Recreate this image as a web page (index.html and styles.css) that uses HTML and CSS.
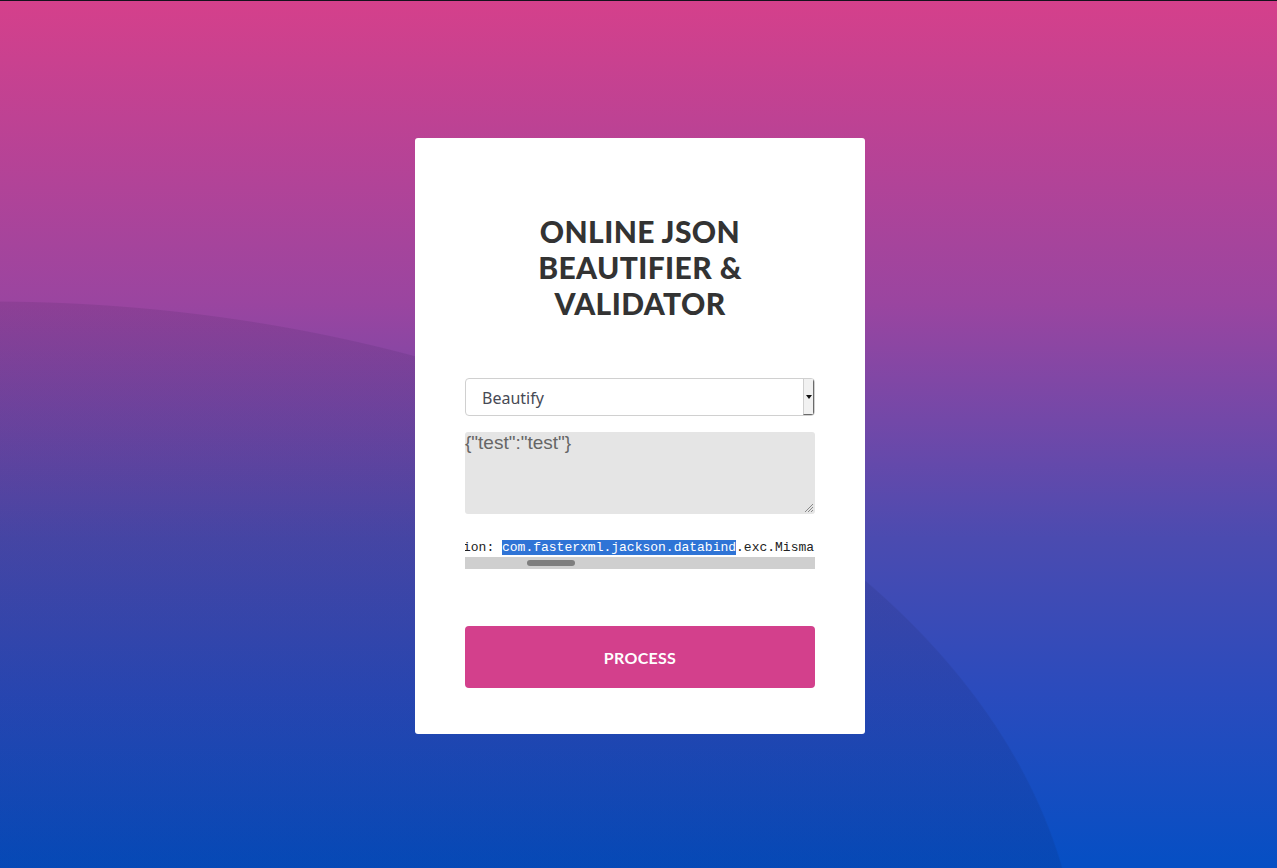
FILE: index.html
```html
<!DOCTYPE html>
<html lang="en">
<head>
<meta charset="utf-8">
<title>Online JSON Beautifier &amp; Validator</title>
<link rel="stylesheet" href="styles.css">
</head>
<body>
<main class="page">
  <section class="card">
    <h1 class="title">ONLINE JSON<br>BEAUTIFIER &amp;<br>VALIDATOR</h1>
    <div class="select">
      <span class="select-value">Beautify</span>
      <span class="select-button"><span class="caret"></span></span>
    </div>
    <div class="textarea">
      <span class="textarea-text">{"test":"test"}</span>
      <svg class="grip" width="10" height="10" viewBox="0 0 10 10">
        <path d="M9 1 L1 9 M9 4 L4 9 M9 7 L7 9" stroke="#888" stroke-width="1" fill="none"/>
      </svg>
    </div>
    <div class="output">
      <div class="output-line">ion: <span class="sel">com.fasterxml.jackson.databind</span>.exc.MismatchedInputException</div>
      <div class="scrollbar"><span class="thumb"></span></div>
    </div>
    <button class="process" type="button">PROCESS</button>
  </section>
</main>
</body>
</html>
```

FILE: styles.css
```css
html, body {
  margin: 0;
  padding: 0;
}
body {
  min-height: 868px;
  border-top: 1px solid #15121c;
  box-sizing: border-box;
  background:
    radial-gradient(1091px 692px at -10px 993px, rgba(10, 10, 40, 0.09) 99.85%, rgba(10, 10, 40, 0) 100%),
    linear-gradient(180deg, #d5408b 0%, #9a45a0 35%, #4b4bb0 62%, #2a4bbd 80%, #054fc4 100%);
  font-family: "Lato", "Liberation Sans", sans-serif;
}
.page {
  display: flex;
  justify-content: center;
  padding: 137px 0 0 3px;
}
.card {
  width: 450px;
  box-sizing: border-box;
  background: #fff;
  border-radius: 3px;
  padding: 75px 50px 46px;
  display: flex;
  flex-direction: column;
}
.title {
  margin: 0 0 57px;
  text-align: center;
  font-family: "Lato", sans-serif;
  font-weight: 900;
  font-size: 30px;
  line-height: 36px;
  letter-spacing: 0.4px;
  color: #333;
}
.select {
  height: 38px;
  box-sizing: border-box;
  border: 1px solid #d0d0d0;
  border-radius: 4px;
  display: flex;
  align-items: center;
  justify-content: space-between;
  padding-left: 16px;
  overflow: hidden;
}
.select-value {
  font-family: "Noto Sans", "Open Sans", sans-serif;
  font-size: 16px;
  color: #474a55;
  padding-top: 2px;
}
.select-button {
  width: 11px;
  height: 36px;
  box-sizing: border-box;
  background: #f1f1f1;
  border-left: 1px solid #cfcfcf;
  border-right: 1px solid #6a6a6a;
  border-bottom: 1px solid #6a6a6a;
  display: flex;
  align-items: center;
  justify-content: center;
}
.caret {
  width: 0;
  height: 0;
  border-left: 3px solid transparent;
  border-right: 3px solid transparent;
  border-top: 4px solid #111;
}
.textarea {
  margin-top: 16px;
  height: 82px;
  background: #e5e5e5;
  border-radius: 3px;
  display: flex;
  justify-content: space-between;
  align-items: flex-start;
}
.textarea-text {
  font-family: "Liberation Sans", Arial, sans-serif;
  font-size: 19px;
  line-height: 22px;
  color: #666;
}
.grip {
  align-self: flex-end;
  margin: 0 1px 1px 0;
}
.output {
  margin-top: 25px;
}
.output-line {
  font-family: "Liberation Mono", monospace;
  font-size: 13px;
  line-height: 18px;
  color: #222;
  white-space: pre;
  overflow: hidden;
  text-indent: -2px;
}
.sel {
  background: #2f74d6;
  color: #fff;
}
.scrollbar {
  height: 12px;
  background: #cfcfcf;
  display: flex;
  align-items: center;
  padding-left: 62px;
}
.thumb {
  width: 48px;
  height: 6px;
  border-radius: 3px;
  background: #7e7e7e;
}
.process {
  margin-top: 57px;
  height: 62px;
  border: 0;
  border-radius: 4px;
  background: #d3408c;
  color: #fff;
  font-family: "Lato", sans-serif;
  font-weight: 700;
  font-size: 16px;
  letter-spacing: 0.3px;
  cursor: pointer;
}
```
